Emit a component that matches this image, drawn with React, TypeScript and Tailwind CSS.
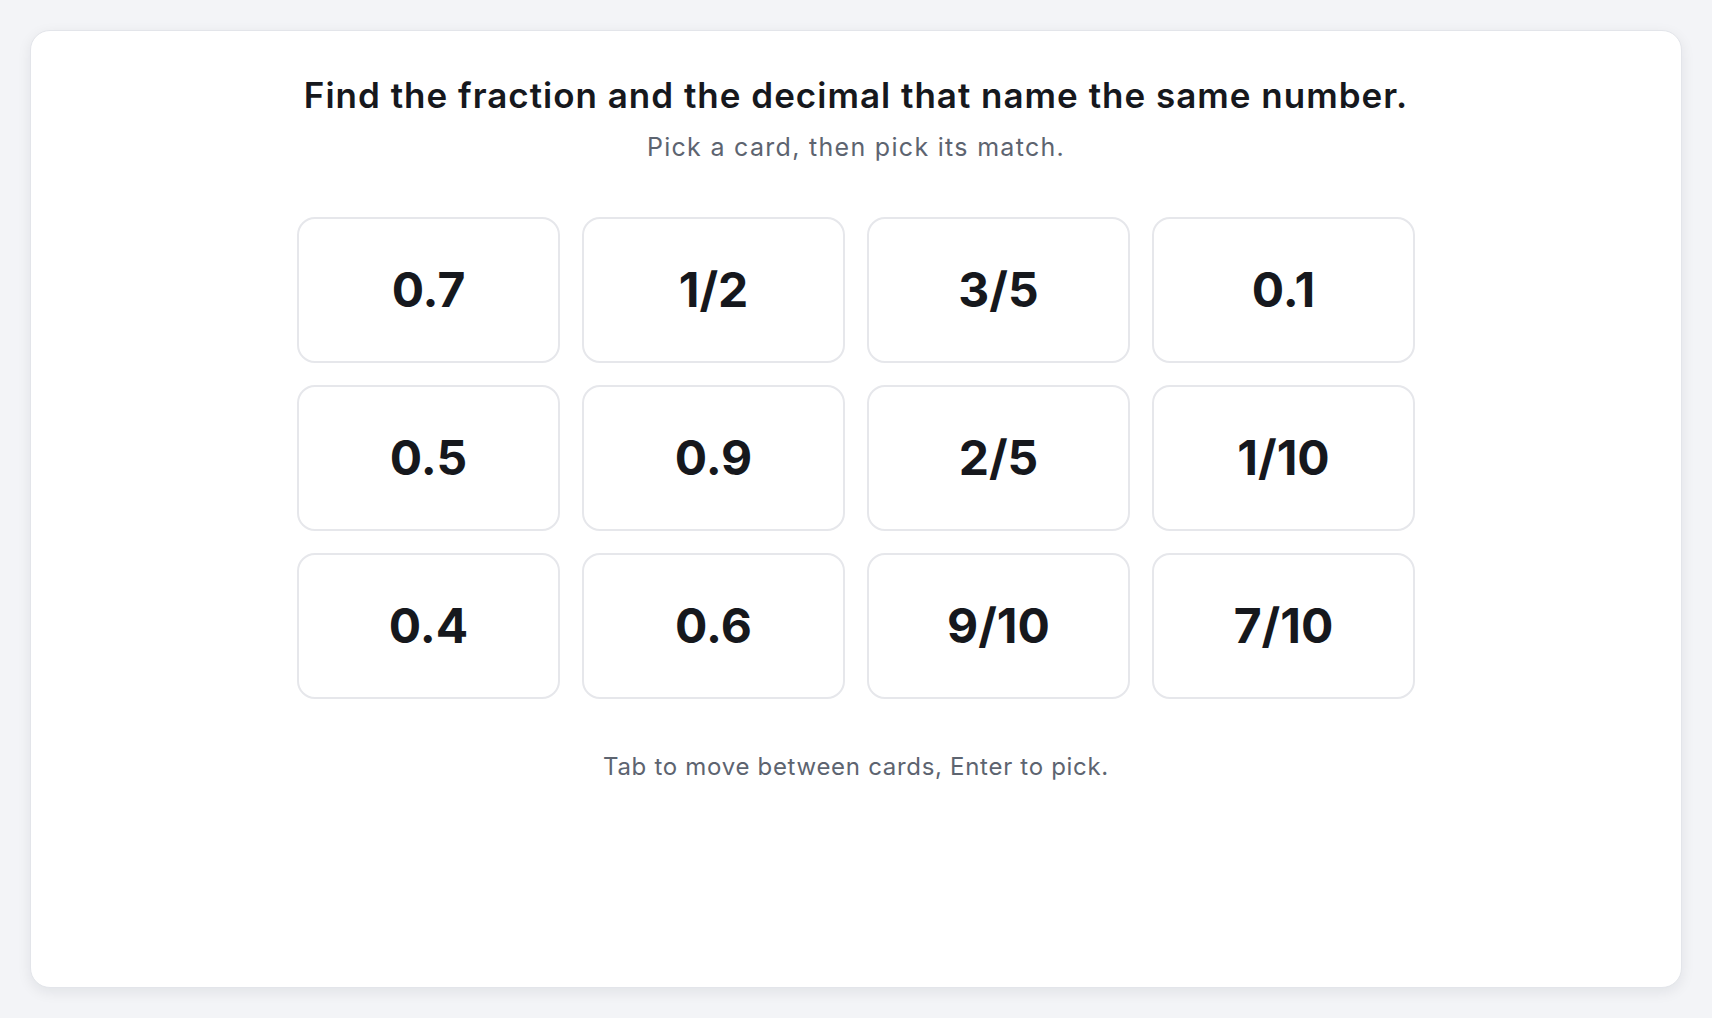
import React, { useState } from "react";

const CARDS = ["0.7", "1/2", "3/5", "0.1", "0.5", "0.9", "2/5", "1/10", "0.4", "0.6", "9/10", "7/10"];

function MatchCard({ label, picked, onPick }: { label: string; picked: boolean; onPick: () => void }) {
  return (
    <button
      onClick={onPick}
      className={`h-[146px] rounded-[18px] border-2 bg-white flex items-center justify-center text-[48px] font-bold leading-none text-[#16181d] ${
        picked ? "border-indigo-400" : "border-[#e6e7eb]"
      }`}
    >
      {label}
    </button>
  );
}

export default function App() {
  const [picked, setPicked] = useState<number | null>(null);

  return (
    <div
      className="min-h-screen bg-[#f3f4f7] p-[30px]"
      style={{ fontFamily: "Inter, 'Noto Sans', sans-serif" }}
    >
      <div className="h-[958px] rounded-[20px] border border-[#e3e5ea] bg-white shadow-[0_4px_14px_rgba(15,23,42,0.08)] pt-[44px] flex flex-col items-center">
        <h1 className="text-[35px] leading-[40px] font-semibold text-[#16181d] tracking-[1px]">
          Find the fraction and the decimal that name the same number.
        </h1>
        <p className="mt-4 text-[25px] leading-[32px] tracking-[1.3px] text-[#5d6470]">
          Pick a card, then pick its match.
        </p>

        {/* Cards */}
        <div className="mt-[54px] grid grid-cols-4 gap-x-[22px] gap-y-[22px] w-[1118px]">
          {CARDS.map((c, i) => (
            <MatchCard key={c} label={c} picked={picked === i} onPick={() => setPicked(i)} />
          ))}
        </div>

        <p className="mt-[52px] text-[24px] leading-[32px] tracking-[0.7px] text-[#5d6470]">
          Tab to move between cards, Enter to pick.
        </p>
      </div>
    </div>
  );
}
